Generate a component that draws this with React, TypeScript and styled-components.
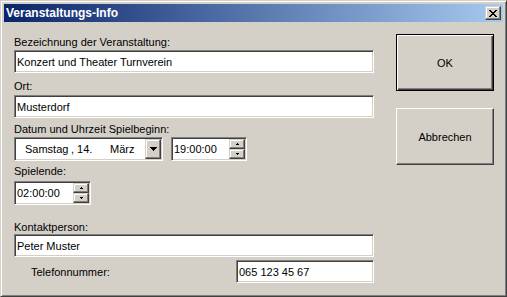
import React from 'react';
import styled, { createGlobalStyle, css } from 'styled-components';

const FACE = '#D4D0C8';
const HI = '#FFFFFF';
const SH = '#808080';
const DK = '#404040';

const Global = createGlobalStyle`
  html, body { margin: 0; padding: 0; background: ${FACE}; }
  body { font-family: "Liberation Sans", Arial, sans-serif; font-size: 11px; color: #000; }
  * { box-sizing: border-box; }
`;

const sunken = css`
  border: 1px solid;
  border-color: ${SH} ${HI} ${HI} ${SH};
  box-shadow: inset 1px 1px ${DK}, inset -1px -1px ${FACE};
  background: #fff;
`;

const smallRaised = css`
  border: 1px solid;
  border-color: ${FACE} ${DK} ${DK} ${FACE};
  box-shadow: inset -1px -1px ${SH}, inset 1px 1px ${HI};
  background: ${FACE};
`;

const Window = styled.div`
  width: 507px;
  height: 297px;
  border: 1px solid;
  border-color: ${FACE} ${DK} ${DK} ${FACE};
  box-shadow: inset 1px 1px ${HI}, inset -1px -1px ${SH};
  padding: 3px;
  background: ${FACE};
  display: flex;
  flex-direction: column;
`;

const TitleBar = styled.div`
  height: 18px;
  flex: none;
  background: linear-gradient(to right, #0a246a, #a6caf0);
  display: flex;
  align-items: center;
  justify-content: space-between;
  padding: 0 2px 0 2px;
`;

const Title = styled.span`
  color: #fff;
  font-weight: bold;
  font-size: 12px;
  line-height: 18px;
  white-space: nowrap;
`;

const CloseBtn = styled.div`
  ${smallRaised};
  width: 16px;
  height: 14px;
  display: flex;
  align-items: center;
  justify-content: center;
`;

const Client = styled.div`
  flex: 1;
  display: flex;
  align-items: flex-start;
`;

const FormCol = styled.div`
  width: 370px;
  padding: 14px 0 0 10px;
  display: flex;
  flex-direction: column;
`;

const ButtonCol = styled.div`
  margin-left: 22px;
  padding-top: 12px;
  display: flex;
  flex-direction: column;
`;

const Label = styled.div<{ $mt?: number }>`
  height: 13px;
  line-height: 13px;
  margin-top: ${(p) => p.$mt ?? 0}px;
  white-space: nowrap;
`;

const Field = styled.div<{ $w: number; $mt?: number; $push?: boolean }>`
  ${sunken};
  width: ${(p) => p.$w}px;
  height: 23px;
  margin-top: ${(p) => p.$mt ?? 0}px;
  margin-left: ${(p) => (p.$push ? 'auto' : '0')};
  padding-left: 2px;
  display: flex;
  align-items: center;
  white-space: nowrap;
  flex: none;
`;

const Row = styled.div<{ $mt?: number }>`
  display: flex;
  align-items: center;
  gap: 8px;
  margin-top: ${(p) => p.$mt ?? 0}px;
`;

const Combo = styled.div<{ $w: number }>`
  ${sunken};
  width: ${(p) => p.$w}px;
  height: 24px;
  padding: 1px;
  display: flex;
  align-items: stretch;
  flex: none;
`;

const ComboText = styled.div`
  flex: 1;
  display: flex;
  align-items: center;
  padding-left: 9px;
  white-space: nowrap;
`;

const DatePart = styled.span<{ $w: number }>`
  display: inline-block;
  width: ${(p) => p.$w}px;
  white-space: pre;
`;

const DropBtn = styled.div`
  ${smallRaised};
  width: 16px;
  display: flex;
  align-items: center;
  justify-content: center;
`;

const TimeText = styled.div`
  flex: 1;
  display: flex;
  align-items: center;
  padding-left: 1px;
`;

const Spinner = styled.div`
  width: 16px;
  display: flex;
  flex-direction: column;
`;

const SpinBtn = styled.div`
  ${smallRaised};
  flex: 1;
  display: flex;
  align-items: center;
  justify-content: center;
`;

const PhoneLabel = styled.div`
  padding-left: 17px;
  white-space: nowrap;
`;

const DlgButton = styled.div<{ $default?: boolean; $mt?: number }>`
  width: 98px;
  height: 57px;
  margin-top: ${(p) => p.$mt ?? 0}px;
  display: flex;
  align-items: center;
  justify-content: center;
  background: ${FACE};
  border: 1px solid;
  ${(p) =>
    p.$default
      ? css`
          border-color: #000;
          box-shadow: inset 1px 1px ${HI}, inset -1px -1px ${DK}, inset -2px -2px ${SH};
        `
      : css`
          border-color: ${HI} ${DK} ${DK} ${HI};
          box-shadow: inset -1px -1px ${SH}, inset 1px 1px ${FACE};
        `}
`;

const CloseGlyph = () => {
  const rows: [number, number][][] = [
    [[0, 2], [6, 2]],
    [[1, 2], [5, 2]],
    [[2, 4]],
    [[3, 2]],
    [[2, 4]],
    [[1, 2], [5, 2]],
    [[0, 2], [6, 2]],
  ];
  return (
    <svg width="8" height="7" viewBox="0 0 8 7" shapeRendering="crispEdges">
      {rows.map((r, y) =>
        r.map(([x, w], i) => <rect key={`${y}-${i}`} x={x} y={y} width={w} height={1} fill="#000" />)
      )}
    </svg>
  );
};

const DownArrow = () => (
  <svg width="7" height="4" viewBox="0 0 7 4" shapeRendering="crispEdges">
    <rect x="0" y="0" width="7" height="1" fill="#000" />
    <rect x="1" y="1" width="5" height="1" fill="#000" />
    <rect x="2" y="2" width="3" height="1" fill="#000" />
    <rect x="3" y="3" width="1" height="1" fill="#000" />
  </svg>
);

const SmallArrow = ({ up }: { up?: boolean }) => (
  <svg width="3" height="2" viewBox="0 0 3 2" shapeRendering="crispEdges">
    {up ? (
      <>
        <rect x="1" y="0" width="1" height="1" fill="#000" />
        <rect x="0" y="1" width="3" height="1" fill="#000" />
      </>
    ) : (
      <>
        <rect x="0" y="0" width="3" height="1" fill="#000" />
        <rect x="1" y="1" width="1" height="1" fill="#000" />
      </>
    )}
  </svg>
);

const TimeBox = ({ w, value }: { w: number; value: string }) => (
  <Combo $w={w}>
    <TimeText>{value}</TimeText>
    <Spinner>
      <SpinBtn>
        <SmallArrow up />
      </SpinBtn>
      <SpinBtn>
        <SmallArrow />
      </SpinBtn>
    </Spinner>
  </Combo>
);

export default function App() {
  return (
    <>
      <Global />
      <Window>
        <TitleBar>
          <Title>Veranstaltungs-Info</Title>
          <CloseBtn>
            <CloseGlyph />
          </CloseBtn>
        </TitleBar>
        <Client>
          <FormCol>
            <Label>Bezeichnung der Veranstaltung:</Label>
            <Field $w={360} $mt={1}>Konzert und Theater Turnverein</Field>
            <Label $mt={7}>Ort:</Label>
            <Field $w={360} $mt={2}>Musterdorf</Field>
            <Label $mt={5}>Datum und Uhrzeit Spielbeginn:</Label>
            <Row $mt={1}>
              <Combo $w={149}>
                <ComboText>
                  <DatePart $w={46}>Samstag</DatePart>
                  <DatePart $w={39}>, 14.</DatePart>
                  <span>März</span>
                </ComboText>
                <DropBtn>
                  <DownArrow />
                </DropBtn>
              </Combo>
              <TimeBox w={76} value="19:00:00" />
            </Row>
            <Label $mt={4}>Spielende:</Label>
            <Row $mt={3}>
              <TimeBox w={77} value="02:00:00" />
            </Row>
            <Label $mt={16}>Kontaktperson:</Label>
            <Field $w={360}>Peter Muster</Field>
            <Row $mt={3}>
              <PhoneLabel>Telefonnummer:</PhoneLabel>
              <Field $w={138} $push>065 123 45 67</Field>
            </Row>
          </FormCol>
          <ButtonCol>
            <DlgButton $default>OK</DlgButton>
            <DlgButton $mt={17}>Abbrechen</DlgButton>
          </ButtonCol>
        </Client>
      </Window>
    </>
  );
}
